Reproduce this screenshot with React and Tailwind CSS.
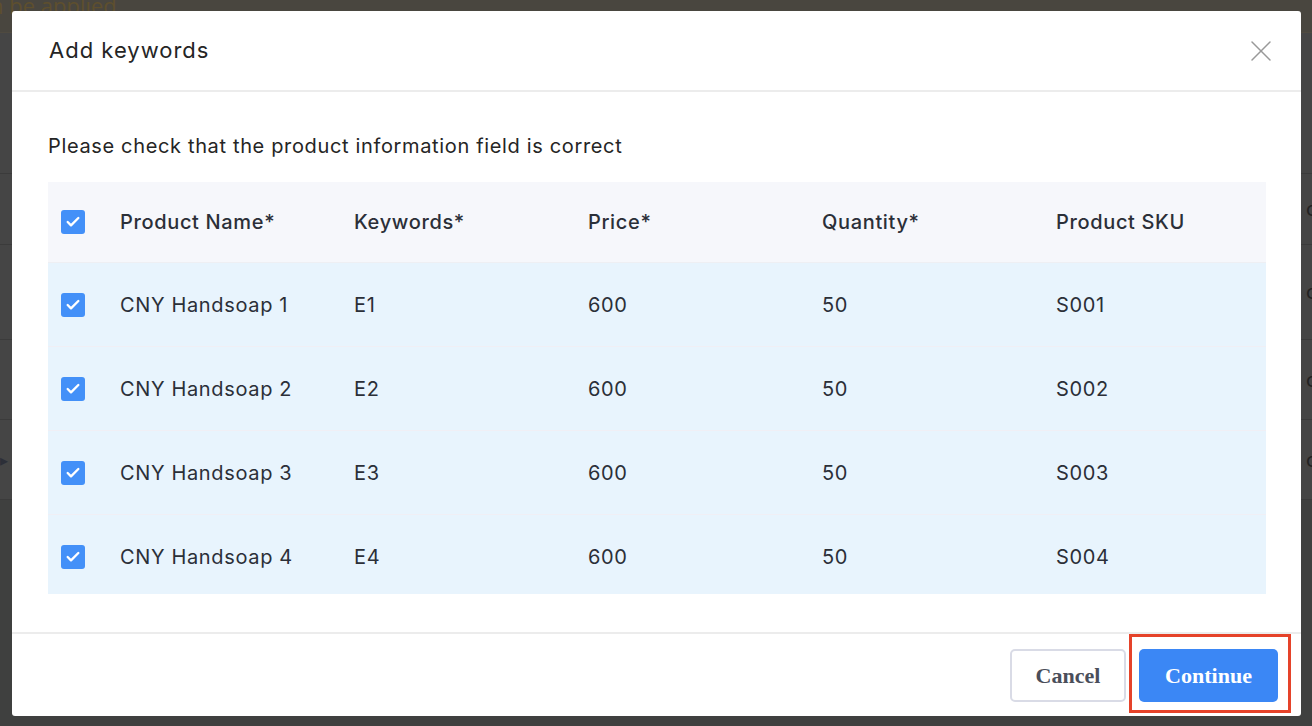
import { X, Check } from 'lucide-react';

const rows = [
  { name: 'CNY Handsoap 1', kw: 'E1', price: '600', qty: '50', sku: 'S001' },
  { name: 'CNY Handsoap 2', kw: 'E2', price: '600', qty: '50', sku: 'S002' },
  { name: 'CNY Handsoap 3', kw: 'E3', price: '600', qty: '50', sku: 'S003' },
  { name: 'CNY Handsoap 4', kw: 'E4', price: '600', qty: '50', sku: 'S004' },
];

const bgRows = [
  { h: 'h-[71px]', arrow: false },
  { h: 'h-[95px]', arrow: false },
  { h: 'h-[80px]', arrow: false },
  { h: 'h-[80px]', arrow: true },
];

function Box() {
  return (
    <div className="w-6 h-6 rounded-[3px] bg-[#4390f8] flex items-center justify-center">
      <Check className="w-4 h-4 text-white" strokeWidth={3.5} />
    </div>
  );
}

export default function App() {
  return (
    <div className="relative w-[1312px] h-[726px] overflow-hidden bg-[#3f403f] font-['Inter',sans-serif]">
      {/* page behind the overlay */}
      <div className="h-[33px] bg-[#49463f] border-b border-[#4f4a40] flex items-start">
        <span className="text-[22px] leading-none -mt-[6px] -ml-[10px] text-[#5e4f2e] font-['Open_Sans',sans-serif]">n be applied.</span>
      </div>
      <div className="bg-[#454545]">
        <div className="h-[141px] border-b border-[#3b3b3b]" />
        {bgRows.map((r, i) => (
          <div key={i} className={`${r.h} border-b border-[#3b3b3b] flex items-center justify-between`}>
            <span className={`text-[16px] leading-none text-[#2c2f38] ${r.arrow ? '' : 'invisible'}`}>▸</span>
            <span className="text-[20px] text-[#222] -mr-[6px]">o</span>
          </div>
        ))}
      </div>

      {/* modal */}
      <div className="absolute left-[12px] top-[11px] w-[1289px] h-[705px] bg-white rounded-[3px] flex flex-col">
        <div className="h-[81px] border-b-2 border-[#ececec] flex items-center justify-between pl-[37px] pr-[22px] shrink-0">
          <h2 className="text-[22px] font-normal text-[#252525] tracking-[1px]">Add keywords</h2>
          <X className="w-9 h-9 text-[#999]" strokeWidth={1} />
        </div>

        <div className="flex-1 pl-[36px] pr-[35px] pt-[40px]">
          <p className="text-[20px] text-[#252525] leading-[28px] tracking-[0.65px]">Please check that the product information field is correct</p>
          <div className="mt-[22px]">
            <div className="h-[81px] bg-[#f6f7fb] border-b border-[#eeeff3] flex items-center text-[20px] font-medium text-[#2b2f38] tracking-[0.65px]">
              <div className="w-[72px] pl-[13px]"><Box /></div>
              <div className="w-[234px]">Product Name*</div>
              <div className="w-[234px]">Keywords*</div>
              <div className="w-[234px]">Price*</div>
              <div className="w-[234px]">Quantity*</div>
              <div className="w-[210px]">Product SKU</div>
            </div>
            {rows.map((r, i) => (
              <div key={r.sku} className={`bg-[#e8f4fd] flex items-center text-[20px] text-[#2b2f38] tracking-[0.65px] ${i < 3 ? 'h-[84px] border-b border-[#f0eff5]' : 'h-[79px] pt-[4px]'}`}>
                <div className="w-[72px] pl-[13px]"><Box /></div>
                <div className="w-[234px]">{r.name}</div>
                <div className="w-[234px]">{r.kw}</div>
                <div className="w-[234px]">{r.price}</div>
                <div className="w-[234px]">{r.qty}</div>
                <div className="w-[210px]">{r.sku}</div>
              </div>
            ))}
          </div>
        </div>

        <div className="h-[84px] border-t-2 border-[#ececec] flex items-center justify-end gap-[13px] pr-[23px] shrink-0 font-['Liberation_Serif',serif]">
          <button className="w-[116px] h-[53px] border-2 border-[#d9dbe6] rounded-[5px] bg-white text-[22px] font-bold text-[#4a4e5a]">Cancel</button>
          <div className="relative">
            <button className="w-[139px] h-[53px] rounded-[5px] bg-[#3b87f5] text-[22px] font-bold text-white">Continue</button>
            <div className="absolute -left-[10px] -top-[15px] w-[162px] h-[79px] border-[3px] border-[#e5432a] pointer-events-none" />
          </div>
        </div>
      </div>
    </div>
  );
}
